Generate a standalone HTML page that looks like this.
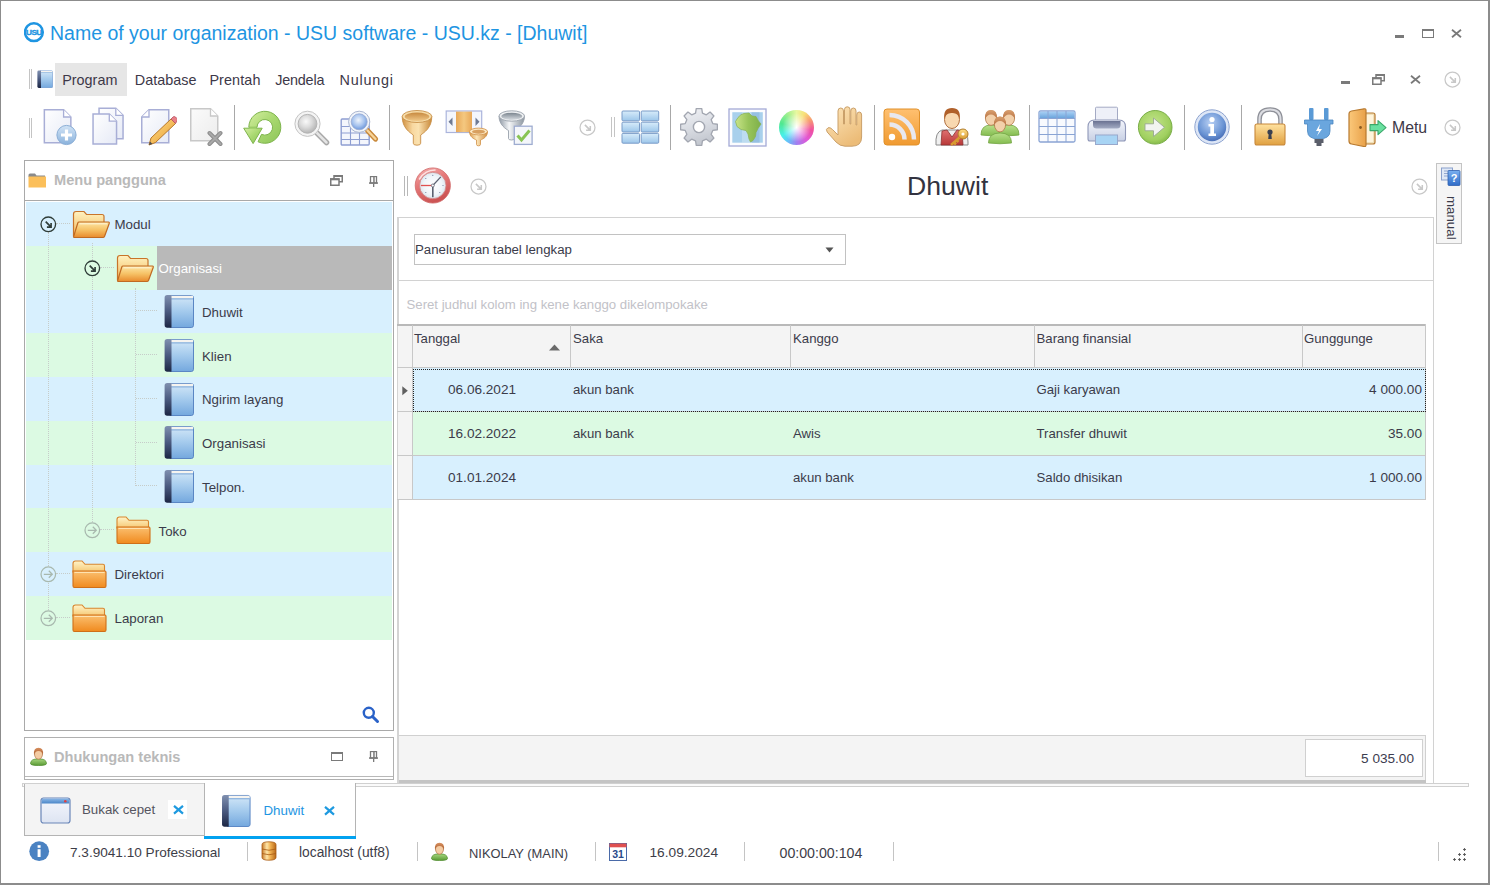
<!DOCTYPE html><html><head><meta charset="utf-8"><style>html,body{margin:0;padding:0;background:#fff;overflow:hidden}body{width:1490px;height:885px;position:relative;font-family:"Liberation Sans", sans-serif}div{position:absolute;box-sizing:border-box}.t{white-space:nowrap}</style></head><body><div style="left:0px;top:0px;width:1490px;height:885px;background:#fff"></div><svg style="position:absolute;left:24px;top:22px;" width="21" height="21" viewBox="0 0 21 21"><circle cx="9.9" cy="10.2" r="8.9" fill="none" stroke="#1e95e2" stroke-width="2.5"/><text x="9.9" y="12.9" text-anchor="middle" font-family="Liberation Sans" font-weight="700" font-size="7.4" fill="#1e95e2" stroke="#1e95e2" stroke-width="0.35" letter-spacing="-0.5" transform="translate(9.9 0) scale(1.12 1) translate(-9.9 0)">USU</text></svg><div class="t" style="left:50px;top:20.54px;font-size:19.5px;line-height:25px;color:#1e95e2;font-weight:400;">Name of your organization - USU software - USU.kz - [Dhuwit]</div><div style="left:1395px;top:35px;width:9px;height:3px;background:#7a7a7a"></div><div style="left:1422px;top:29px;width:12px;height:9px;border:1.5px solid #7a7a7a;border-top-width:2.5px"></div><svg style="position:absolute;left:1451px;top:29px;" width="11" height="9" viewBox="0 0 11 9"><path d="M1 0.8 L10 8.2 M10 0.8 L1 8.2" stroke="#7a7a7a" stroke-width="1.8" fill="none"/></svg><div style="left:29px;top:69px;width:1px;height:20px;background:#c4c4c4"></div><div style="left:31px;top:69px;width:1px;height:20px;background:#c4c4c4"></div><svg style="position:absolute;left:37px;top:70px;" width="16" height="18" viewBox="0 0 30 34"><defs><linearGradient id="g1" x1="0" y1="0" x2="0" y2="1"><stop offset="0" stop-color="#d4e8f8"/><stop offset="0.45" stop-color="#a8cdee"/><stop offset="1" stop-color="#74a8de"/></linearGradient><linearGradient id="g2" x1="0" y1="0" x2="0" y2="1"><stop offset="0" stop-color="#8090b0"/><stop offset="0.5" stop-color="#4a5a80"/><stop offset="1" stop-color="#1c2644"/></linearGradient></defs><rect x="5" y="1.5" width="24.5" height="32" rx="2.2" fill="url(#g1)" stroke="#5a86c4" stroke-width="1"/><rect x="5.5" y="1.8" width="23.5" height="2.6" fill="#f6f4f0"/><rect x="5.5" y="4.4" width="23.5" height="1" fill="#7aa6d8"/><path d="M3.2 1 L7.5 1 L7.5 33.8 L3.2 33.8 Q0.6 33.8 0.6 31 L0.6 3.8 Q0.6 1 3.2 1 Z" fill="url(#g2)"/></svg><div style="left:55px;top:63px;width:72px;height:33px;background:#e6e6e6"></div><div class="t" style="left:62.2px;top:70.71px;font-size:14.4px;line-height:19px;color:#3d3848;font-weight:400;letter-spacing:0px">Program</div><div class="t" style="left:134.79999999999998px;top:70.71px;font-size:14.4px;line-height:19px;color:#3d3848;font-weight:400;letter-spacing:0px">Database</div><div class="t" style="left:209.39999999999998px;top:70.71px;font-size:14.4px;line-height:19px;color:#3d3848;font-weight:400;letter-spacing:0.1px">Prentah</div><div class="t" style="left:275.2px;top:70.71px;font-size:14.4px;line-height:19px;color:#3d3848;font-weight:400;letter-spacing:-0.2px">Jendela</div><div class="t" style="left:339.59999999999997px;top:70.71px;font-size:14.4px;line-height:19px;color:#3d3848;font-weight:400;letter-spacing:0.75px">Nulungi</div><div style="left:1341px;top:81px;width:9px;height:3px;background:#7a7a7a"></div><svg style="position:absolute;left:1372px;top:74px;" width="13" height="11" viewBox="0 0 13 11"><rect x="4" y="0.75" width="8.25" height="6" fill="none" stroke="#7a7a7a" stroke-width="1.5"/><rect x="0.75" y="4" width="8.25" height="6.25" fill="#fff" stroke="#7a7a7a" stroke-width="1.5"/><rect x="4" y="0" width="9" height="2" fill="#7a7a7a"/><rect x="0" y="3.3" width="9.5" height="2" fill="#7a7a7a"/></svg><svg style="position:absolute;left:1410px;top:75px;" width="11" height="9" viewBox="0 0 11 9"><path d="M1 0.8 L10 8.2 M10 0.8 L1 8.2" stroke="#7a7a7a" stroke-width="1.8" fill="none"/></svg><svg style="position:absolute;left:1442.5px;top:69.8px;" width="19" height="19" viewBox="0 0 19 19"><circle cx="9.5" cy="9.5" r="7.5" fill="none" stroke="#c8c8c8" stroke-width="1.25"/><path d="M6.9 6.9 L12.1 12.1 M12.3 8.1 L12.3 12.3 L8.1 12.3" stroke="#c8c8c8" stroke-width="1.55" fill="none"/></svg><div style="left:29px;top:118px;width:1px;height:20px;background:#c4c4c4"></div><div style="left:31px;top:118px;width:1px;height:20px;background:#c4c4c4"></div><div style="left:234px;top:105px;width:1px;height:45px;background:#a8a8a8"></div><div style="left:389px;top:105px;width:1px;height:45px;background:#a8a8a8"></div><div style="left:670px;top:105px;width:1px;height:45px;background:#a8a8a8"></div><div style="left:874px;top:105px;width:1px;height:45px;background:#a8a8a8"></div><div style="left:1029px;top:105px;width:1px;height:45px;background:#a8a8a8"></div><div style="left:1184px;top:105px;width:1px;height:45px;background:#a8a8a8"></div><div style="left:1241px;top:105px;width:1px;height:45px;background:#a8a8a8"></div><div style="left:611px;top:117px;width:1px;height:20px;background:#c4c4c4"></div><div style="left:614px;top:117px;width:1px;height:20px;background:#c4c4c4"></div><svg style="position:absolute;left:577.5px;top:118.4px;" width="19" height="19" viewBox="0 0 19 19"><circle cx="9.5" cy="9.5" r="7.5" fill="none" stroke="#c8c8c8" stroke-width="1.25"/><path d="M6.9 6.9 L12.1 12.1 M12.3 8.1 L12.3 12.3 L8.1 12.3" stroke="#c8c8c8" stroke-width="1.55" fill="none"/></svg><svg style="position:absolute;left:1442.5px;top:117.5px;" width="19" height="19" viewBox="0 0 19 19"><circle cx="9.5" cy="9.5" r="7.5" fill="none" stroke="#c8c8c8" stroke-width="1.25"/><path d="M6.9 6.9 L12.1 12.1 M12.3 8.1 L12.3 12.3 L8.1 12.3" stroke="#c8c8c8" stroke-width="1.55" fill="none"/></svg><div class="t" style="left:1392px;top:116.93px;font-size:15.8px;line-height:21px;color:#3d3848;font-weight:400;">Metu</div><svg style="position:absolute;left:43px;top:108px;" width="35" height="38" viewBox="0 0 35 38"><defs><linearGradient id="g4" x1="0" y1="0" x2="1" y2="1"><stop offset="0" stop-color="#ffffff"/><stop offset="1" stop-color="#e6eaf6"/></linearGradient></defs><g transform="translate(0.6 1)"><path d="M0.75 0.75 L20 0.75 L27.25 8 L27.25 33.75 L0.75 33.75 Z" fill="url(#g4)" stroke="#a8aed6" stroke-width="1.5"/><path d="M20 0.75 L20 8 L27.25 8" fill="#fff" stroke="#a8aed6" stroke-width="1.3"/></g><defs><linearGradient id="g3" x1="0" y1="0" x2="0" y2="1"><stop offset="0" stop-color="#d2e4f6"/><stop offset="1" stop-color="#8ab2dc"/></linearGradient></defs><circle cx="23.5" cy="27" r="9.6" fill="url(#g3)" stroke="#8aaed6" stroke-width="1"/><path d="M23.5 21.5 V32.5 M18 27 H29" stroke="#fff" stroke-width="3.2"/></svg><svg style="position:absolute;left:91px;top:106px;" width="34" height="40" viewBox="0 0 34 40"><defs><linearGradient id="g5" x1="0" y1="0" x2="1" y2="1"><stop offset="0" stop-color="#ffffff"/><stop offset="1" stop-color="#e6eaf6"/></linearGradient></defs><g transform="translate(7.3 1.4)"><path d="M0.75 0.75 L17.5 0.75 L24.75 8 L24.75 31.25 L0.75 31.25 Z" fill="url(#g5)" stroke="#a8aed6" stroke-width="1.5"/><path d="M17.5 0.75 L17.5 8 L24.75 8" fill="#fff" stroke="#a8aed6" stroke-width="1.3"/></g><defs><linearGradient id="g6" x1="0" y1="0" x2="1" y2="1"><stop offset="0" stop-color="#ffffff"/><stop offset="1" stop-color="#e6eaf6"/></linearGradient></defs><g transform="translate(1.3 7.2)"><path d="M0.75 0.75 L17 0.75 L24.25 8 L24.25 30.75 L0.75 30.75 Z" fill="url(#g6)" stroke="#a8aed6" stroke-width="1.5"/><path d="M17 0.75 L17 8 L24.25 8" fill="#fff" stroke="#a8aed6" stroke-width="1.3"/></g></svg><svg style="position:absolute;left:140px;top:108px;" width="37" height="39" viewBox="0 0 37 39"><defs><linearGradient id="g9" x1="0" y1="0" x2="1" y2="1"><stop offset="0" stop-color="#ffffff"/><stop offset="1" stop-color="#e6eaf6"/></linearGradient></defs><g transform="translate(1 1)"><path d="M8 0.75 L27.75 0.75 L27.75 33.75 L0.75 33.75 L0.75 8 Z" fill="url(#g9)" stroke="#a8aed6" stroke-width="1.5"/><path d="M8 0.75 L8 8 L0.75 8" fill="#fff" stroke="#a8aed6" stroke-width="1.3"/></g><defs><linearGradient id="g7" x1="0" y1="0" x2="1" y2="1"><stop offset="0" stop-color="#ffe08a"/><stop offset="1" stop-color="#e89a30"/></linearGradient></defs><path d="M9 37 L11 30 L31 11 L35.5 15.5 L15.5 34.5 Z" fill="url(#g7)" stroke="#b8782a" stroke-width="1"/><path d="M31 11 L33 9 Q34 8 35.5 9 L37 10.5 Q38 12 37 13 L35.5 15.5 Z" fill="#e88088" stroke="#b85060" stroke-width="0.8"/><path d="M9 37 L10 33.5 L12.5 36 Z" fill="#505050"/></svg><svg style="position:absolute;left:189px;top:107px;" width="35" height="39" viewBox="0 0 35 39"><defs><linearGradient id="g10" x1="0" y1="0" x2="1" y2="1"><stop offset="0" stop-color="#fbfbfb"/><stop offset="1" stop-color="#ececec"/></linearGradient></defs><g transform="translate(1 1)"><path d="M0.75 0.75 L20.5 0.75 L27.75 8 L27.75 32.75 L0.75 32.75 Z" fill="url(#g10)" stroke="#c8c8c8" stroke-width="1.5"/><path d="M20.5 0.75 L20.5 8 L27.75 8" fill="#fff" stroke="#c8c8c8" stroke-width="1.3"/></g><path d="M20.5 26 L31.5 37 M31.5 26 L20.5 37" stroke="#8c8c8c" stroke-width="4" stroke-linecap="round"/><path d="M20.5 26 L31.5 37 M31.5 26 L20.5 37" stroke="#a8a8a8" stroke-width="2" stroke-linecap="round"/></svg><svg style="position:absolute;left:241px;top:108px;" width="42" height="38" viewBox="0 0 42 38"><defs><linearGradient id="g11" x1="0" y1="0" x2="1" y2="1"><stop offset="0" stop-color="#d4eea0"/><stop offset="0.5" stop-color="#a8d870"/><stop offset="1" stop-color="#8cc458"/></linearGradient></defs><path d="M7.800000000000001 19.3 A16 16 0 1 1 17.04 33.8 L20.5 26.37 A7.8 7.8 0 1 0 16.0 19.3 Z" fill="url(#g11)" stroke="#7eb44c" stroke-width="1"/><path d="M2.7 20.2 L21.2 20.2 L12.1 35.6 Z" fill="url(#g11)" stroke="#7eb44c" stroke-width="1" stroke-linejoin="round"/><path d="M8.5 19.5 L15.4 19.5 L15.4 20.8 L8.5 20.8 Z" fill="#a8d870"/></svg><svg style="position:absolute;left:292px;top:108px;" width="40" height="40" viewBox="0 0 40 40"><defs><radialGradient id="g12" cx="0.42" cy="0.38" r="0.6"><stop offset="0" stop-color="#fafafa"/><stop offset="0.55" stop-color="#dadada"/><stop offset="1" stop-color="#b8b8b8"/></radialGradient></defs><path d="M25 25 L34.5 34.5" stroke="#a8a8a8" stroke-width="5.5" stroke-linecap="round"/><path d="M25 25 L34.5 34.5" stroke="#e4e4e4" stroke-width="2.5" stroke-linecap="round"/><circle cx="15.5" cy="15.8" r="12.6" fill="#f4f4f4" stroke="#c4c4c4" stroke-width="1"/><circle cx="15.5" cy="15.8" r="9.4" fill="url(#g12)" stroke="#b4b4b4" stroke-width="1"/></svg><svg style="position:absolute;left:340px;top:107px;" width="40" height="40" viewBox="0 0 40 40"><rect x="1.2" y="12" width="28" height="26" rx="1" fill="#f4f6fc" stroke="#8e9ed2" stroke-width="1.4"/><path d="M1 19.5 H29 M1 26 H29 M1 32.5 H29 M10.5 12 V38 M19.5 12 V38" stroke="#8e9ed2" stroke-width="1.1"/><defs><radialGradient id="g13" cx="0.45" cy="0.4" r="0.6"><stop offset="0" stop-color="#eef4fc"/><stop offset="0.6" stop-color="#a8c4ee"/><stop offset="1" stop-color="#6e98dc"/></radialGradient></defs><path d="M27.5 23.5 L35.5 32" stroke="#c8883a" stroke-width="5.2" stroke-linecap="round"/><path d="M27.5 23.5 L35.5 32" stroke="#f8d498" stroke-width="2.4" stroke-linecap="round"/><circle cx="19.2" cy="14.8" r="10.6" fill="#f2f5fa" stroke="#aab6d0" stroke-width="1"/><circle cx="19.2" cy="14.8" r="8" fill="url(#g13)" stroke="#98aad0" stroke-width="0.8"/></svg><svg style="position:absolute;left:401px;top:108px;" width="33" height="38" viewBox="0 0 33 38"><defs><linearGradient id="g14" x1="0" y1="0" x2="1" y2="0"><stop offset="0" stop-color="#d09040"/><stop offset="0.35" stop-color="#f8d8a0"/><stop offset="0.55" stop-color="#fbe2b0"/><stop offset="1" stop-color="#c88838"/></linearGradient><linearGradient id="g15" x1="0" y1="0" x2="0" y2="1"><stop offset="0" stop-color="#c88a40"/><stop offset="1" stop-color="#f0c888"/></linearGradient></defs><path d="M1.2 8.5 C1.2 20 9 24.5 12.3 27 L12.3 35.3 Q12.3 37.2 16 37.2 Q19.7 37.2 19.7 35.3 L19.7 27 C23 24.5 30.8 20 30.8 8.5 Z" fill="url(#g14)" stroke="#c89048" stroke-width="0.9"/><ellipse cx="16" cy="8.5" rx="14.8" ry="6" fill="#f6dca8" stroke="#c89048" stroke-width="0.9"/><ellipse cx="16" cy="8.8" rx="12.3" ry="4.2" fill="url(#g15)"/></svg><svg style="position:absolute;left:445px;top:110px;" width="43" height="37" viewBox="0 0 43 37"><rect x="1.2" y="1" width="35.5" height="21.5" fill="#f4f6fc" stroke="#aab4dc" stroke-width="1.2"/><defs><linearGradient id="g17" x1="0" y1="0" x2="1" y2="0"><stop offset="0" stop-color="#e8a858"/><stop offset="0.5" stop-color="#f4c880"/><stop offset="1" stop-color="#e8a858"/></linearGradient></defs><rect x="11" y="1.6" width="16" height="20.5" fill="url(#g17)"/><path d="M7.5 7.5 L3.5 11.8 L7.5 16 Z M30.5 7.5 L34.5 11.8 L30.5 16 Z" fill="#6e7a94"/><defs><linearGradient id="g16" x1="0" y1="0" x2="1" y2="0"><stop offset="0" stop-color="#d8984a"/><stop offset="0.4" stop-color="#fde6b8"/><stop offset="1" stop-color="#d08c40"/></linearGradient></defs><path d="M24.5 21.5 C24.5 27 29 29 31.5 30 L31.5 34.5 Q31.5 35.8 33.5 35.8 Q35.5 35.8 35.5 34.5 L35.5 30 C38 29 42.5 27 42.5 21.5 Z" fill="url(#g16)" stroke="#d09048" stroke-width="0.8"/><ellipse cx="33.5" cy="21.5" rx="9" ry="3.4" fill="#fbe6c0" stroke="#d09048" stroke-width="0.8"/><ellipse cx="33.5" cy="21.7" rx="6.5" ry="2" fill="#d8a060"/></svg><svg style="position:absolute;left:498px;top:108px;" width="36" height="38" viewBox="0 0 36 38"><defs><linearGradient id="g18" x1="0" y1="0" x2="1" y2="0"><stop offset="0" stop-color="#8e98a4"/><stop offset="0.4" stop-color="#f4f6f8"/><stop offset="1" stop-color="#8a949e"/></linearGradient><linearGradient id="g19" x1="0" y1="0" x2="0" y2="1"><stop offset="0" stop-color="#7a848e"/><stop offset="1" stop-color="#d8dde2"/></linearGradient></defs><path d="M1 8 C1 17 8 21 10.5 22.5 L10.5 30.5 Q10.5 32 13.5 32 Q16.5 32 16.5 30.5 L16.5 22.5 C19 21 26.5 17 26.5 8 Z" fill="url(#g18)" stroke="#9aa2ac" stroke-width="0.9"/><ellipse cx="13.75" cy="8" rx="12.75" ry="5.2" fill="#eef0f2" stroke="#9aa2ac" stroke-width="0.9"/><ellipse cx="13.75" cy="8.3" rx="10.5" ry="3.6" fill="url(#g19)"/><rect x="16.3" y="18.2" width="17.8" height="18.2" fill="#f4f6fa" stroke="#9eacd0" stroke-width="1.3"/><path d="M19.5 27.5 L23.5 32 L31.5 22.5" stroke="#88c454" stroke-width="3" fill="none"/></svg><svg style="position:absolute;left:621px;top:110px;" width="40" height="35" viewBox="0 0 40 35"><defs><linearGradient id="g20" x1="0" y1="0" x2="0" y2="1"><stop offset="0" stop-color="#d8ecfa"/><stop offset="1" stop-color="#9cc6ea"/></linearGradient></defs><rect x="1.0" y="1.0" width="17.5" height="9.8" rx="1" fill="url(#g20)" stroke="#7a9cc8" stroke-width="1"/><rect x="20.2" y="1.0" width="17.5" height="9.8" rx="1" fill="url(#g20)" stroke="#7a9cc8" stroke-width="1"/><rect x="1.0" y="12.2" width="17.5" height="9.8" rx="1" fill="url(#g20)" stroke="#7a9cc8" stroke-width="1"/><rect x="20.2" y="12.2" width="17.5" height="9.8" rx="1" fill="url(#g20)" stroke="#7a9cc8" stroke-width="1"/><rect x="1.0" y="23.4" width="17.5" height="9.8" rx="1" fill="url(#g20)" stroke="#7a9cc8" stroke-width="1"/><rect x="20.2" y="23.4" width="17.5" height="9.8" rx="1" fill="url(#g20)" stroke="#7a9cc8" stroke-width="1"/></svg><svg style="position:absolute;left:680px;top:108px;" width="38" height="38" viewBox="0 0 38 38"><defs><linearGradient id="g21" x1="0" y1="0" x2="0.3" y2="1"><stop offset="0" stop-color="#f2f3f6"/><stop offset="0.5" stop-color="#dcdfe5"/><stop offset="1" stop-color="#c4c8d0"/></linearGradient></defs><polygon points="15.56,5.22 16.25,0.60 21.75,0.60 22.44,5.22 26.31,6.83 30.06,4.05 33.95,7.94 31.17,11.69 32.78,15.56 37.40,16.25 37.40,21.75 32.78,22.44 31.17,26.31 33.95,30.06 30.06,33.95 26.31,31.17 22.44,32.78 21.75,37.40 16.25,37.40 15.56,32.78 11.69,31.17 7.94,33.95 4.05,30.06 6.83,26.31 5.22,22.44 0.60,21.75 0.60,16.25 5.22,15.56 6.83,11.69 4.05,7.94 7.94,4.05 11.69,6.83" fill="url(#g21)" stroke="#a2a6b0" stroke-width="1.3" stroke-linejoin="round"/><circle cx="19" cy="19" r="5.6" fill="#fff" stroke="#a2a6b0" stroke-width="1.4"/></svg><svg style="position:absolute;left:728px;top:108px;" width="39" height="39" viewBox="0 0 39 39"><rect x="1" y="1" width="37" height="37" fill="#fbfcfe" stroke="#a4aad6" stroke-width="1.3"/><rect x="4.3" y="4.2" width="30.5" height="30.5" fill="#a8d0ec"/><rect x="14" y="4.2" width="9.5" height="30.5" fill="#d8ecf6" opacity="0.45"/><rect x="23.5" y="4.2" width="8" height="30.5" fill="#80acd8" opacity="0.45"/><defs><linearGradient id="g22" x1="0" y1="0" x2="1" y2="0"><stop offset="0" stop-color="#c8e488"/><stop offset="0.5" stop-color="#98c45a"/><stop offset="1" stop-color="#7eb04a"/></linearGradient></defs><path d="M10 9.5 Q13 5.8 16 5.5 L21 5 L24 8 L28 8.5 L30.5 13 L33 16 L30 20.5 L28 24.5 L27.5 28.5 L25 32.5 L22.5 34 L21 31 L20 26 L18 22.5 L13 21.5 L9 18.5 L7.5 13.5 Z" fill="url(#g22)" stroke="#86b050" stroke-width="0.7"/></svg><div style="left:778.8px;top:109.8px;width:35px;height:35px;border-radius:50%;background:radial-gradient(circle at 50% 50%, rgba(255,255,255,1) 0%, rgba(255,255,255,0.7) 18%, rgba(255,255,255,0) 58%),conic-gradient(from 0deg, #e8f8a0, #f8e078, #f8a070 60deg, #f050a0 100deg, #e058d8 140deg, #a080f0 180deg, #60c8f8 215deg, #48f0e8 240deg, #50e890 285deg, #a8f090 330deg, #e8f8a0)"></div><svg style="position:absolute;left:825px;top:106px;" width="38" height="41" viewBox="0 0 38 41"><defs><linearGradient id="g23" x1="0" y1="0" x2="0.6" y2="1"><stop offset="0" stop-color="#fde6bc"/><stop offset="1" stop-color="#ecbc78"/></linearGradient></defs><path d="M13 29 L13 5 Q13 2 15.75 2 Q18.5 2 18.5 5 L18.5 18 L19.5 18 L19.5 3.5 Q19.5 0.8 22.25 0.8 Q25 0.8 25 3.5 L25 18 L25.8 18 L25.8 5 Q25.8 2 28.4 2 Q31 2 31 5 L31 19 L31.8 19 L31.8 9 Q31.8 6 34.2 6 Q36.6 6 36.6 9 L36.6 31 Q36.6 40.2 27 40.2 L20 40.2 Q15 40.2 11 36 L2.2 26 Q0.3 23 3 21.8 Q5 21 7.5 23.5 Z" fill="url(#g23)" stroke="#caa06a" stroke-width="1"/></svg><svg style="position:absolute;left:883px;top:108px;" width="38" height="38" viewBox="0 0 38 38"><defs><linearGradient id="g24" x1="0" y1="0" x2="0" y2="1"><stop offset="0" stop-color="#ffc070"/><stop offset="1" stop-color="#f09a30"/></linearGradient></defs><rect x="1" y="1" width="35.5" height="36" rx="3" fill="url(#g24)" stroke="#e0902a" stroke-width="1"/><circle cx="9" cy="29" r="3.2" fill="#fff"/><path d="M6.5 16.5 A15 15 0 0 1 21.5 31.5" stroke="#e8e8f0" stroke-width="4.5" fill="none"/><path d="M6.5 7 A24.5 24.5 0 0 1 31 31.5" stroke="#e8e8f0" stroke-width="4.5" fill="none"/></svg><svg style="position:absolute;left:934px;top:106px;" width="37" height="41" viewBox="0 0 37 41"><defs><linearGradient id="g25" x1="0" y1="0" x2="0" y2="1"><stop offset="0" stop-color="#e07070"/><stop offset="1" stop-color="#b83838"/></linearGradient><linearGradient id="g26" x1="0" y1="0" x2="0" y2="1"><stop offset="0" stop-color="#ffe08a"/><stop offset="1" stop-color="#d89a30"/></linearGradient></defs><path d="M2 39 Q1 26 8 24 L28 24 Q34 26 34 36 L34 39 Z" fill="#f0f0f0" stroke="#8a8a8a" stroke-width="1"/><path d="M7 39 L8 25 L13 24 L18 31 L23 24 L28 25 L29 39 Z" fill="url(#g25)" stroke="#8a3030" stroke-width="0.8"/><ellipse cx="18" cy="13.5" rx="7.5" ry="9" fill="#f8d8b0" stroke="#b07040" stroke-width="1"/><path d="M10.3 13 Q9 2 18 2 Q27 2 25.7 13 Q24 6.5 18 7 Q12 6.5 10.3 13 Z" fill="#b0602a"/><circle cx="29" cy="28" r="5" fill="url(#g26)" stroke="#b07a28" stroke-width="1"/><circle cx="29" cy="28" r="1.6" fill="#fff"/><path d="M25.5 31.5 L17 39 M20 36.5 L22 38.5 M22.5 34 L24.5 36" stroke="#d89a30" stroke-width="2.5"/></svg><svg style="position:absolute;left:980px;top:108px;" width="40" height="38" viewBox="0 0 40 38"><defs><linearGradient id="g27" x1="0" y1="0" x2="0" y2="1"><stop offset="0" stop-color="#b8e08a"/><stop offset="1" stop-color="#84bc50"/></linearGradient><linearGradient id="g28" x1="0" y1="0" x2="0" y2="1"><stop offset="0" stop-color="#d8a070"/><stop offset="1" stop-color="#b87040"/></linearGradient></defs><path d="M1 27 Q1 17 11 17 Q21 17 21 27 Q11 28.5 1 27 Z" fill="url(#g27)" stroke="#74a444" stroke-width="0.8"/><ellipse cx="11" cy="10" rx="5.6" ry="7.4" fill="#f2d0aa" stroke="#b07848" stroke-width="0.8"/><path d="M5.2 11.0 Q4.2 2.0 11 2.0 Q17.8 2.0 16.8 11.0 Q15.0 6.5 11 6.5 Q7.0 6.5 5.2 11.0 Z" fill="url(#g28)"/><path d="M19 27 Q19 17 29 17 Q39 17 39 27 Q29 28.5 19 27 Z" fill="url(#g27)" stroke="#74a444" stroke-width="0.8"/><ellipse cx="29" cy="10" rx="5.6" ry="7.4" fill="#f2d0aa" stroke="#b07848" stroke-width="0.8"/><path d="M23.2 11.0 Q22.2 2.0 29 2.0 Q35.8 2.0 34.8 11.0 Q33.0 6.5 29 6.5 Q25.0 6.5 23.2 11.0 Z" fill="url(#g28)"/><path d="M8.5 35.0 Q8.5 25.0 20 25.0 Q31.5 25.0 31.5 35.0 Q20 36.5 8.5 35.0 Z" fill="url(#g27)" stroke="#74a444" stroke-width="0.8"/><ellipse cx="20" cy="16.5" rx="5.6" ry="7.4" fill="#f2d0aa" stroke="#b07848" stroke-width="0.8"/><path d="M14.2 17.5 Q13.2 8.5 20 8.5 Q26.8 8.5 25.8 17.5 Q24.0 13.0 20 13.0 Q16.0 13.0 14.2 17.5 Z" fill="url(#g28)"/></svg><svg style="position:absolute;left:1038px;top:110px;" width="38" height="33" viewBox="0 0 38 33"><defs><linearGradient id="g29" x1="0" y1="0" x2="0" y2="1"><stop offset="0" stop-color="#a8d0f4"/><stop offset="1" stop-color="#6aa4dc"/></linearGradient></defs><rect x="1" y="1" width="36" height="31" rx="1.5" fill="#f8fafe" stroke="#8aa4d4" stroke-width="1.3"/><rect x="1.6" y="1.6" width="34.8" height="6.5" fill="url(#g29)"/><path d="M1 8.5 H37 M1 16.5 H37 M1 24.5 H37 M10 1 V32 M19 1 V32 M28 1 V32" stroke="#8aa4d4" stroke-width="1"/></svg><svg style="position:absolute;left:1087px;top:106px;" width="40" height="40" viewBox="0 0 40 40"><defs><linearGradient id="g30" x1="0" y1="0" x2="0" y2="1"><stop offset="0" stop-color="#f4f6fc"/><stop offset="1" stop-color="#c8d0e4"/></linearGradient><linearGradient id="g31" x1="0" y1="0" x2="0" y2="1"><stop offset="0" stop-color="#6a7292"/><stop offset="1" stop-color="#a4acc4"/></linearGradient></defs><rect x="8.5" y="1.2" width="22" height="16" rx="1" fill="#eef0f8" stroke="#a4aac4" stroke-width="1"/><path d="M1 21 Q1 14 7.5 14 L32 14 Q38.5 14 38.5 21 L38.5 33 Q38.5 35 36.5 35 L3 35 Q1 35 1 33 Z" fill="url(#g30)" stroke="#9098b8" stroke-width="1.1"/><path d="M6 15 L33.5 15 L33.5 19 Q33.5 22.5 30 22.5 L9.5 22.5 Q6 22.5 6 19 Z" fill="url(#g31)"/><rect x="8.5" y="29" width="22" height="9.5" fill="#a8d4f4" stroke="#98a8cc" stroke-width="1"/></svg><svg style="position:absolute;left:1137px;top:109px;" width="37" height="37" viewBox="0 0 37 37"><defs><radialGradient id="g32" cx="0.45" cy="0.4" r="0.6"><stop offset="0" stop-color="#c4e48c"/><stop offset="0.8" stop-color="#a0d060"/><stop offset="1" stop-color="#88bc4c"/></radialGradient></defs><circle cx="18.2" cy="18.3" r="16.8" fill="url(#g32)" stroke="#7aae48" stroke-width="1"/><path d="M8 14.8 L16.5 14.8 L16.5 9 L27.5 18.3 L16.5 27.6 L16.5 21.8 L8 21.8 Z" fill="#f2f4f0" stroke="#98a890" stroke-width="0.9" stroke-linejoin="round"/></svg><svg style="position:absolute;left:1194px;top:109px;" width="37" height="37" viewBox="0 0 37 37"><defs><radialGradient id="g33" cx="0.45" cy="0.35" r="0.65"><stop offset="0" stop-color="#b8d0f4"/><stop offset="0.7" stop-color="#6a94d4"/><stop offset="1" stop-color="#4a70b8"/></radialGradient></defs><circle cx="18" cy="18" r="17.2" fill="#dde6f6" stroke="#8ea4d0" stroke-width="1"/><circle cx="18" cy="18" r="14.2" fill="url(#g33)"/><circle cx="18" cy="10.5" r="2.6" fill="#fff"/><path d="M14.5 15 L20 15 L20 24.5 L22 24.5 L22 27 L14.5 27 L14.5 24.5 L16.3 24.5 L16.3 17.5 L14.5 17.5 Z" fill="#fff"/></svg><svg style="position:absolute;left:1254px;top:107px;" width="33" height="40" viewBox="0 0 33 40"><defs><linearGradient id="g34" x1="0" y1="0" x2="0" y2="1"><stop offset="0" stop-color="#ffe2a0"/><stop offset="1" stop-color="#e0a040"/></linearGradient></defs><path d="M5.5 18 L5.5 12.5 Q5.5 2.5 16 2.5 Q26.5 2.5 26.5 12.5 L26.5 18" stroke="#8e9098" stroke-width="4.6" fill="none"/><path d="M5.5 18 L5.5 12.5 Q5.5 2.5 16 2.5 Q26.5 2.5 26.5 12.5 L26.5 18" stroke="#dcdde2" stroke-width="2" fill="none"/><rect x="1" y="17" width="30" height="21" rx="2" fill="url(#g34)" stroke="#c8883a" stroke-width="1.1"/><circle cx="16" cy="25" r="2.6" fill="#3a4050"/><path d="M14.8 26 L17.2 26 L17.8 32 L14.2 32 Z" fill="#3a4050"/></svg><svg style="position:absolute;left:1303px;top:107px;" width="32" height="41" viewBox="0 0 32 41"><rect x="6" y="1" width="4.5" height="12" rx="1" fill="#5a9ad6"/><rect x="21" y="1" width="4.5" height="12" rx="1" fill="#5a9ad6"/><path d="M1.5 13 L30 13 L30 17 L27 17 L27 24 Q27 32 15.8 32 Q4.5 32 4.5 24 L4.5 17 L1.5 17 Z" fill="#6aa6de" stroke="#4a86c0" stroke-width="0.8"/><path d="M17 17 L13 24 L16 24 L14 29 L19 22 L16 22 Z" fill="#fff"/><rect x="11.5" y="32" width="9" height="4" fill="#5a5e6a"/><rect x="13.5" y="35.5" width="5" height="3.5" fill="#5a5e6a"/></svg><svg style="position:absolute;left:1347px;top:108px;" width="42" height="39" viewBox="0 0 42 39"><defs><linearGradient id="g35" x1="0" y1="0" x2="1" y2="0"><stop offset="0" stop-color="#fbc87a"/><stop offset="1" stop-color="#e8a048"/></linearGradient></defs><path d="M16 5 L26 5 Q28 5 28 7 L28 34 Q28 36 26 36 L16 36 Z" fill="#f0e0b8" stroke="#b87a30" stroke-width="1.2"/><rect x="18" y="7" width="8" height="27" fill="#fff4dc"/><path d="M2 6 Q2 3.5 4.5 3 L17 0.8 Q19 0.5 19 2.5 L19 37 Q19 39 17 38.5 L4.5 36 Q2 35.5 2 33 Z" fill="url(#g35)" stroke="#b87a30" stroke-width="1.2"/><circle cx="13.5" cy="19.5" r="1.4" fill="#8a5a20"/><path d="M23 16.6 L31 16.6 L31 12.6 L39 19.6 L31 26.7 L31 22.6 L23 22.6 Z" fill="#6ae0a0" stroke="#3aa86a" stroke-width="1.1" stroke-linejoin="round"/></svg><div style="left:24px;top:160px;width:370px;height:571px;border:1px solid #a9a9a9;background:#fff"></div><div style="left:25px;top:200px;width:368px;height:1px;background:#a9a9a9"></div><svg style="position:absolute;left:28px;top:173px;" width="19" height="15" viewBox="0 0 19 15"><path d="M0.5 2 Q0.5 0.5 2 0.5 L7 0.5 L8.5 2.5 L17 2.5 L17 4 L0.5 4 Z" fill="#8a8a8a"/><rect x="0.5" y="3.5" width="17.5" height="11" fill="#fbbf5a"/></svg><div class="t" style="left:54px;top:171.44px;font-size:14.6px;line-height:19px;color:#b9b9b9;font-weight:700;">Menu pangguna</div><svg style="position:absolute;left:330px;top:175px;" width="13" height="11" viewBox="0 0 13 11"><rect x="4" y="0.75" width="8.25" height="6" fill="none" stroke="#7a7a7a" stroke-width="1.5"/><rect x="0.75" y="4" width="8.25" height="6.25" fill="#fff" stroke="#7a7a7a" stroke-width="1.5"/><rect x="4" y="0" width="9" height="2" fill="#7a7a7a"/><rect x="0" y="3.3" width="9.5" height="2" fill="#7a7a7a"/></svg><svg style="position:absolute;left:369px;top:176px;" width="9" height="11" viewBox="0 0 9 11"><rect x="1.5" y="0.5" width="6" height="6.5" fill="none" stroke="#7a7a7a" stroke-width="1.3"/><rect x="4.2" y="1" width="1.5" height="6" fill="#7a7a7a"/><rect x="0" y="6.3" width="9" height="1.5" fill="#7a7a7a"/><rect x="4" y="7.5" width="1.3" height="3.5" fill="#7a7a7a"/></svg><div style="left:26px;top:202.0px;width:366px;height:43.75px;background:#d8f0fe"></div><div style="left:26px;top:245.75px;width:366px;height:43.75px;background:#dcfae3"></div><div style="left:26px;top:289.5px;width:366px;height:43.75px;background:#d8f0fe"></div><div style="left:26px;top:333.25px;width:366px;height:43.75px;background:#dcfae3"></div><div style="left:26px;top:377.0px;width:366px;height:43.75px;background:#d8f0fe"></div><div style="left:26px;top:420.75px;width:366px;height:43.75px;background:#dcfae3"></div><div style="left:26px;top:464.5px;width:366px;height:43.75px;background:#d8f0fe"></div><div style="left:26px;top:508.25px;width:366px;height:43.75px;background:#dcfae3"></div><div style="left:26px;top:552.0px;width:366px;height:43.75px;background:#d8f0fe"></div><div style="left:26px;top:595.75px;width:366px;height:43.75px;background:#dcfae3"></div><div style="left:157px;top:245.75px;width:235px;height:43.75px;background:#b9b9b9"></div><div style="left:48px;top:231.875px;width:1px;height:377.75px;border-left:1px dotted #c6ccc9"></div><div style="left:92px;top:243px;width:1px;height:279.125px;border-left:1px dotted #c6ccc9"></div><div style="left:135px;top:288px;width:1px;height:198.375px;border-left:1px dotted #c6ccc9"></div><div style="left:56px;top:223px;width:14px;height:1px;border-top:1px dotted #c6ccc9"></div><div style="left:56px;top:573px;width:14px;height:1px;border-top:1px dotted #c6ccc9"></div><div style="left:56px;top:617px;width:14px;height:1px;border-top:1px dotted #c6ccc9"></div><div style="left:100px;top:267px;width:14px;height:1px;border-top:1px dotted #c6ccc9"></div><div style="left:100px;top:529px;width:14px;height:1px;border-top:1px dotted #c6ccc9"></div><div style="left:136px;top:310px;width:21px;height:1px;border-top:1px dotted #c6ccc9"></div><div style="left:136px;top:354px;width:21px;height:1px;border-top:1px dotted #c6ccc9"></div><div style="left:136px;top:398px;width:21px;height:1px;border-top:1px dotted #c6ccc9"></div><div style="left:136px;top:442px;width:21px;height:1px;border-top:1px dotted #c6ccc9"></div><div style="left:136px;top:485px;width:21px;height:1px;border-top:1px dotted #c6ccc9"></div><svg style="position:absolute;left:38.7px;top:215.17499999999998px;" width="18.6" height="18.6" viewBox="0 0 18.6 18.6"><circle cx="9.3" cy="9.3" r="7.3" fill="#d8f0fe" stroke="#2e3c38" stroke-width="1.35"/><path d="M6.700000000000001 6.700000000000001 L11.9 11.9 M12.100000000000001 7.9 L12.100000000000001 12.100000000000001 L7.9 12.100000000000001" stroke="#2e3c38" stroke-width="1.6500000000000001" fill="none"/></svg><svg style="position:absolute;left:72px;top:210.0px;" width="38" height="29" viewBox="0 0 38 29"><defs><linearGradient id="g36" x1="0" y1="0" x2="0" y2="1"><stop offset="0" stop-color="#fff2c0"/><stop offset="1" stop-color="#f2b85a"/></linearGradient><linearGradient id="g37" x1="0" y1="0" x2="0" y2="1"><stop offset="0" stop-color="#fde6a6"/><stop offset="0.5" stop-color="#f6c266"/><stop offset="1" stop-color="#e88a2c"/></linearGradient></defs><path d="M1.5 4 Q1.5 1.5 4 1.5 L12 1.5 L14.5 4.5 L30 4.5 Q32 4.5 32 6.5 L32 26 L1.5 26 Z" fill="url(#g36)" stroke="#c8742a" stroke-width="1.2"/><path d="M7 12 L36.5 12 Q37.5 12 37.2 13.5 L32.5 26.5 Q32 27.5 31 27.5 L2.5 27.5 Q1.3 27.5 1.7 26.3 L5.8 13 Q6.2 12 7 12 Z" fill="url(#g37)" stroke="#c06a22" stroke-width="1.2"/><path d="M7.5 13.8 L35 13.8" stroke="#fff6d8" stroke-width="1"/></svg><div class="t" style="left:114.5px;top:216.49px;font-size:13.3px;line-height:17px;color:#3b3b4a;font-weight:400;">Modul</div><svg style="position:absolute;left:82.7px;top:258.925px;" width="18.6" height="18.6" viewBox="0 0 18.6 18.6"><circle cx="9.3" cy="9.3" r="7.3" fill="#dcfae3" stroke="#2e3c38" stroke-width="1.35"/><path d="M6.700000000000001 6.700000000000001 L11.9 11.9 M12.100000000000001 7.9 L12.100000000000001 12.100000000000001 L7.9 12.100000000000001" stroke="#2e3c38" stroke-width="1.6500000000000001" fill="none"/></svg><svg style="position:absolute;left:116px;top:253.75px;" width="38" height="29" viewBox="0 0 38 29"><defs><linearGradient id="g38" x1="0" y1="0" x2="0" y2="1"><stop offset="0" stop-color="#fff2c0"/><stop offset="1" stop-color="#f2b85a"/></linearGradient><linearGradient id="g39" x1="0" y1="0" x2="0" y2="1"><stop offset="0" stop-color="#fde6a6"/><stop offset="0.5" stop-color="#f6c266"/><stop offset="1" stop-color="#e88a2c"/></linearGradient></defs><path d="M1.5 4 Q1.5 1.5 4 1.5 L12 1.5 L14.5 4.5 L30 4.5 Q32 4.5 32 6.5 L32 26 L1.5 26 Z" fill="url(#g38)" stroke="#c8742a" stroke-width="1.2"/><path d="M7 12 L36.5 12 Q37.5 12 37.2 13.5 L32.5 26.5 Q32 27.5 31 27.5 L2.5 27.5 Q1.3 27.5 1.7 26.3 L5.8 13 Q6.2 12 7 12 Z" fill="url(#g39)" stroke="#c06a22" stroke-width="1.2"/><path d="M7.5 13.8 L35 13.8" stroke="#fff6d8" stroke-width="1"/></svg><div class="t" style="left:158.5px;top:260.24px;font-size:13.3px;line-height:17px;color:#ffffff;font-weight:400;">Organisasi</div><svg style="position:absolute;left:163.5px;top:294.0px;" width="30" height="34" viewBox="0 0 30 34"><defs><linearGradient id="g40" x1="0" y1="0" x2="0" y2="1"><stop offset="0" stop-color="#d4e8f8"/><stop offset="0.45" stop-color="#a8cdee"/><stop offset="1" stop-color="#74a8de"/></linearGradient><linearGradient id="g41" x1="0" y1="0" x2="0" y2="1"><stop offset="0" stop-color="#8090b0"/><stop offset="0.5" stop-color="#4a5a80"/><stop offset="1" stop-color="#1c2644"/></linearGradient></defs><rect x="5" y="1.5" width="24.5" height="32" rx="2.2" fill="url(#g40)" stroke="#5a86c4" stroke-width="1"/><rect x="5.5" y="1.8" width="23.5" height="2.6" fill="#f6f4f0"/><rect x="5.5" y="4.4" width="23.5" height="1" fill="#7aa6d8"/><path d="M3.2 1 L7.5 1 L7.5 33.8 L3.2 33.8 Q0.6 33.8 0.6 31 L0.6 3.8 Q0.6 1 3.2 1 Z" fill="url(#g41)"/></svg><div class="t" style="left:202px;top:303.99px;font-size:13.3px;line-height:17px;color:#3b3b4a;font-weight:400;">Dhuwit</div><svg style="position:absolute;left:163.5px;top:337.75px;" width="30" height="34" viewBox="0 0 30 34"><defs><linearGradient id="g42" x1="0" y1="0" x2="0" y2="1"><stop offset="0" stop-color="#d4e8f8"/><stop offset="0.45" stop-color="#a8cdee"/><stop offset="1" stop-color="#74a8de"/></linearGradient><linearGradient id="g43" x1="0" y1="0" x2="0" y2="1"><stop offset="0" stop-color="#8090b0"/><stop offset="0.5" stop-color="#4a5a80"/><stop offset="1" stop-color="#1c2644"/></linearGradient></defs><rect x="5" y="1.5" width="24.5" height="32" rx="2.2" fill="url(#g42)" stroke="#5a86c4" stroke-width="1"/><rect x="5.5" y="1.8" width="23.5" height="2.6" fill="#f6f4f0"/><rect x="5.5" y="4.4" width="23.5" height="1" fill="#7aa6d8"/><path d="M3.2 1 L7.5 1 L7.5 33.8 L3.2 33.8 Q0.6 33.8 0.6 31 L0.6 3.8 Q0.6 1 3.2 1 Z" fill="url(#g43)"/></svg><div class="t" style="left:202px;top:347.74px;font-size:13.3px;line-height:17px;color:#3b3b4a;font-weight:400;">Klien</div><svg style="position:absolute;left:163.5px;top:381.5px;" width="30" height="34" viewBox="0 0 30 34"><defs><linearGradient id="g44" x1="0" y1="0" x2="0" y2="1"><stop offset="0" stop-color="#d4e8f8"/><stop offset="0.45" stop-color="#a8cdee"/><stop offset="1" stop-color="#74a8de"/></linearGradient><linearGradient id="g45" x1="0" y1="0" x2="0" y2="1"><stop offset="0" stop-color="#8090b0"/><stop offset="0.5" stop-color="#4a5a80"/><stop offset="1" stop-color="#1c2644"/></linearGradient></defs><rect x="5" y="1.5" width="24.5" height="32" rx="2.2" fill="url(#g44)" stroke="#5a86c4" stroke-width="1"/><rect x="5.5" y="1.8" width="23.5" height="2.6" fill="#f6f4f0"/><rect x="5.5" y="4.4" width="23.5" height="1" fill="#7aa6d8"/><path d="M3.2 1 L7.5 1 L7.5 33.8 L3.2 33.8 Q0.6 33.8 0.6 31 L0.6 3.8 Q0.6 1 3.2 1 Z" fill="url(#g45)"/></svg><div class="t" style="left:202px;top:391.49px;font-size:13.3px;line-height:17px;color:#3b3b4a;font-weight:400;">Ngirim layang</div><svg style="position:absolute;left:163.5px;top:425.25px;" width="30" height="34" viewBox="0 0 30 34"><defs><linearGradient id="g46" x1="0" y1="0" x2="0" y2="1"><stop offset="0" stop-color="#d4e8f8"/><stop offset="0.45" stop-color="#a8cdee"/><stop offset="1" stop-color="#74a8de"/></linearGradient><linearGradient id="g47" x1="0" y1="0" x2="0" y2="1"><stop offset="0" stop-color="#8090b0"/><stop offset="0.5" stop-color="#4a5a80"/><stop offset="1" stop-color="#1c2644"/></linearGradient></defs><rect x="5" y="1.5" width="24.5" height="32" rx="2.2" fill="url(#g46)" stroke="#5a86c4" stroke-width="1"/><rect x="5.5" y="1.8" width="23.5" height="2.6" fill="#f6f4f0"/><rect x="5.5" y="4.4" width="23.5" height="1" fill="#7aa6d8"/><path d="M3.2 1 L7.5 1 L7.5 33.8 L3.2 33.8 Q0.6 33.8 0.6 31 L0.6 3.8 Q0.6 1 3.2 1 Z" fill="url(#g47)"/></svg><div class="t" style="left:202px;top:435.24px;font-size:13.3px;line-height:17px;color:#3b3b4a;font-weight:400;">Organisasi</div><svg style="position:absolute;left:163.5px;top:469.0px;" width="30" height="34" viewBox="0 0 30 34"><defs><linearGradient id="g48" x1="0" y1="0" x2="0" y2="1"><stop offset="0" stop-color="#d4e8f8"/><stop offset="0.45" stop-color="#a8cdee"/><stop offset="1" stop-color="#74a8de"/></linearGradient><linearGradient id="g49" x1="0" y1="0" x2="0" y2="1"><stop offset="0" stop-color="#8090b0"/><stop offset="0.5" stop-color="#4a5a80"/><stop offset="1" stop-color="#1c2644"/></linearGradient></defs><rect x="5" y="1.5" width="24.5" height="32" rx="2.2" fill="url(#g48)" stroke="#5a86c4" stroke-width="1"/><rect x="5.5" y="1.8" width="23.5" height="2.6" fill="#f6f4f0"/><rect x="5.5" y="4.4" width="23.5" height="1" fill="#7aa6d8"/><path d="M3.2 1 L7.5 1 L7.5 33.8 L3.2 33.8 Q0.6 33.8 0.6 31 L0.6 3.8 Q0.6 1 3.2 1 Z" fill="url(#g49)"/></svg><div class="t" style="left:202px;top:478.99px;font-size:13.3px;line-height:17px;color:#3b3b4a;font-weight:400;">Telpon.</div><svg style="position:absolute;left:82.7px;top:521.4250000000001px;" width="18.6" height="18.6" viewBox="0 0 18.6 18.6"><circle cx="9.3" cy="9.3" r="7.3" fill="#dcfae3" stroke="#a8b8ae" stroke-width="1.25"/><path d="M4.800000000000001 9.3 L13.3 9.3 M9.8 5.800000000000001 L13.3 9.3 L9.8 12.8" stroke="#a8b8ae" stroke-width="1.25" fill="none"/></svg><svg style="position:absolute;left:116px;top:516.25px;" width="35" height="29" viewBox="0 0 35 29"><defs><linearGradient id="g50" x1="0" y1="0" x2="0" y2="1"><stop offset="0" stop-color="#fff4c8"/><stop offset="1" stop-color="#f6c874"/></linearGradient><linearGradient id="g51" x1="0" y1="0" x2="0" y2="1"><stop offset="0" stop-color="#fbc070"/><stop offset="1" stop-color="#f08a1e"/></linearGradient></defs><path d="M1 3.5 Q1 1 3.5 1 L10 1 L13 4.3 L31 4.3 Q32.5 4.3 32.5 6 L32.5 12 L1 12 Z" fill="url(#g50)" stroke="#d8852e" stroke-width="1.1"/><path d="M1 11 L33 11 Q34 11 34 12.5 L34 26 Q34 27.5 32.5 27.5 L2.5 27.5 Q1 27.5 1 26 Z" fill="url(#g51)" stroke="#cf6f18" stroke-width="1.1"/><path d="M2.5 12.5 L32.5 12.5" stroke="#ffe2b0" stroke-width="1"/></svg><div class="t" style="left:158.5px;top:522.74px;font-size:13.3px;line-height:17px;color:#3b3b4a;font-weight:400;">Toko</div><svg style="position:absolute;left:38.7px;top:565.1750000000001px;" width="18.6" height="18.6" viewBox="0 0 18.6 18.6"><circle cx="9.3" cy="9.3" r="7.3" fill="#d8f0fe" stroke="#a8b8ae" stroke-width="1.25"/><path d="M4.800000000000001 9.3 L13.3 9.3 M9.8 5.800000000000001 L13.3 9.3 L9.8 12.8" stroke="#a8b8ae" stroke-width="1.25" fill="none"/></svg><svg style="position:absolute;left:72px;top:560.0px;" width="35" height="29" viewBox="0 0 35 29"><defs><linearGradient id="g52" x1="0" y1="0" x2="0" y2="1"><stop offset="0" stop-color="#fff4c8"/><stop offset="1" stop-color="#f6c874"/></linearGradient><linearGradient id="g53" x1="0" y1="0" x2="0" y2="1"><stop offset="0" stop-color="#fbc070"/><stop offset="1" stop-color="#f08a1e"/></linearGradient></defs><path d="M1 3.5 Q1 1 3.5 1 L10 1 L13 4.3 L31 4.3 Q32.5 4.3 32.5 6 L32.5 12 L1 12 Z" fill="url(#g52)" stroke="#d8852e" stroke-width="1.1"/><path d="M1 11 L33 11 Q34 11 34 12.5 L34 26 Q34 27.5 32.5 27.5 L2.5 27.5 Q1 27.5 1 26 Z" fill="url(#g53)" stroke="#cf6f18" stroke-width="1.1"/><path d="M2.5 12.5 L32.5 12.5" stroke="#ffe2b0" stroke-width="1"/></svg><div class="t" style="left:114.5px;top:566.49px;font-size:13.3px;line-height:17px;color:#3b3b4a;font-weight:400;">Direktori</div><svg style="position:absolute;left:38.7px;top:608.9250000000001px;" width="18.6" height="18.6" viewBox="0 0 18.6 18.6"><circle cx="9.3" cy="9.3" r="7.3" fill="#dcfae3" stroke="#a8b8ae" stroke-width="1.25"/><path d="M4.800000000000001 9.3 L13.3 9.3 M9.8 5.800000000000001 L13.3 9.3 L9.8 12.8" stroke="#a8b8ae" stroke-width="1.25" fill="none"/></svg><svg style="position:absolute;left:72px;top:603.75px;" width="35" height="29" viewBox="0 0 35 29"><defs><linearGradient id="g54" x1="0" y1="0" x2="0" y2="1"><stop offset="0" stop-color="#fff4c8"/><stop offset="1" stop-color="#f6c874"/></linearGradient><linearGradient id="g55" x1="0" y1="0" x2="0" y2="1"><stop offset="0" stop-color="#fbc070"/><stop offset="1" stop-color="#f08a1e"/></linearGradient></defs><path d="M1 3.5 Q1 1 3.5 1 L10 1 L13 4.3 L31 4.3 Q32.5 4.3 32.5 6 L32.5 12 L1 12 Z" fill="url(#g54)" stroke="#d8852e" stroke-width="1.1"/><path d="M1 11 L33 11 Q34 11 34 12.5 L34 26 Q34 27.5 32.5 27.5 L2.5 27.5 Q1 27.5 1 26 Z" fill="url(#g55)" stroke="#cf6f18" stroke-width="1.1"/><path d="M2.5 12.5 L32.5 12.5" stroke="#ffe2b0" stroke-width="1"/></svg><div class="t" style="left:114.5px;top:610.24px;font-size:13.3px;line-height:17px;color:#3b3b4a;font-weight:400;">Laporan</div><svg style="position:absolute;left:362px;top:706px;" width="18" height="18" viewBox="0 0 18 18"><circle cx="6.8" cy="6.8" r="5" fill="none" stroke="#2a62c8" stroke-width="2.4"/><path d="M10.5 10.5 L15.5 15.5" stroke="#2a62c8" stroke-width="3" stroke-linecap="round"/></svg><div style="left:24px;top:737px;width:370px;height:43px;border:1px solid #b0b0b0;background:#fff"></div><div style="left:25px;top:776px;width:368px;height:1px;background:#b8b8b8"></div><svg style="position:absolute;left:29px;top:747px;" width="19" height="19" viewBox="0 0 19 19"><defs><linearGradient id="g56" x1="0" y1="0" x2="0" y2="1"><stop offset="0" stop-color="#a8d880"/><stop offset="1" stop-color="#5a9a34"/></linearGradient><linearGradient id="g57" x1="0" y1="0" x2="0" y2="1"><stop offset="0" stop-color="#d89060"/><stop offset="1" stop-color="#a85a2a"/></linearGradient></defs><path d="M1.5 16.5 Q1.5 11.8 9.5 11.8 Q17.5 11.8 17.5 16.5 Q17.5 18.5 9.5 18.5 Q1.5 18.5 1.5 16.5 Z" fill="url(#g56)" stroke="#4a8a2a" stroke-width="0.7"/><ellipse cx="9.5" cy="7" rx="4" ry="5.2" fill="#f4cca4" stroke="#b07040" stroke-width="0.7"/><path d="M5 8 Q4.2 0.8 9.5 0.8 Q14.8 0.8 14 8 Q13 4 9.5 4 Q6 4 5 8 Z" fill="url(#g57)"/></svg><div class="t" style="left:54px;top:747.94px;font-size:14.6px;line-height:19px;color:#b9b9b9;font-weight:700;">Dhukungan teknis</div><div style="left:331px;top:752px;width:12px;height:9px;border:1.5px solid #7a7a7a;border-top-width:2px"></div><svg style="position:absolute;left:369px;top:751px;" width="9" height="11" viewBox="0 0 9 11"><rect x="1.5" y="0.5" width="6" height="6.5" fill="none" stroke="#7a7a7a" stroke-width="1.3"/><rect x="4.2" y="1" width="1.5" height="6" fill="#7a7a7a"/><rect x="0" y="6.3" width="9" height="1.5" fill="#7a7a7a"/><rect x="4" y="7.5" width="1.3" height="3.5" fill="#7a7a7a"/></svg><div style="left:404px;top:176px;width:1px;height:20px;background:#b8b8b8"></div><div style="left:406.5px;top:176px;width:1px;height:20px;background:#b8b8b8"></div><svg style="position:absolute;left:414px;top:167px;" width="39" height="39" viewBox="0 0 39 39"><defs><radialGradient id="g58" cx="0.5" cy="0.5" r="0.5"><stop offset="0" stop-color="#ffffff"/><stop offset="0.7" stop-color="#f0f5fa"/><stop offset="1" stop-color="#dce6ee"/></radialGradient><linearGradient id="g59" x1="0" y1="0" x2="0.4" y2="1"><stop offset="0" stop-color="#f6b4b4"/><stop offset="0.45" stop-color="#e67a7a"/><stop offset="1" stop-color="#cc5454"/></linearGradient></defs><circle cx="18.8" cy="18.5" r="17.6" fill="url(#g59)" stroke="#d06a6a" stroke-width="0.8"/><path d="M5.5 12 Q11 3.2 21 3" stroke="#fde0e0" stroke-width="1.6" fill="none" stroke-linecap="round"/><circle cx="18.8" cy="18.5" r="13.2" fill="url(#g58)" stroke="#d08080" stroke-width="0.8"/><path d="M18.8 18.5 L26.8 9.8" stroke="#5a6070" stroke-width="1.2"/><path d="M18.8 18.5 L18.8 30.3" stroke="#5a6070" stroke-width="1.6"/><path d="M6.800000000000001 18.5 L18.8 18.5" stroke="#e05050" stroke-width="1.3"/><circle cx="18.8" cy="18.5" r="1.5" fill="#fff" stroke="#5a6070" stroke-width="0.8"/><g fill="#7080a0"><circle cx="18.8" cy="8.3" r="0.6"/><circle cx="29.0" cy="18.5" r="0.6"/><circle cx="11.8" cy="11.5" r="0.6"/><circle cx="11.8" cy="25.5" r="0.6"/><circle cx="25.8" cy="25.5" r="0.6"/></g></svg><svg style="position:absolute;left:468.5px;top:177.1px;" width="19" height="19" viewBox="0 0 19 19"><circle cx="9.5" cy="9.5" r="7.5" fill="none" stroke="#c8c8c8" stroke-width="1.25"/><path d="M6.9 6.9 L12.1 12.1 M12.3 8.1 L12.3 12.3 L8.1 12.3" stroke="#c8c8c8" stroke-width="1.55" fill="none"/></svg><svg style="position:absolute;left:1409.5px;top:177.2px;" width="19" height="19" viewBox="0 0 19 19"><circle cx="9.5" cy="9.5" r="7.5" fill="none" stroke="#c8c8c8" stroke-width="1.25"/><path d="M6.9 6.9 L12.1 12.1 M12.3 8.1 L12.3 12.3 L8.1 12.3" stroke="#c8c8c8" stroke-width="1.55" fill="none"/></svg><div class="t" style="left:907px;top:169.28px;font-size:26.6px;line-height:35px;color:#333340;font-weight:400;">Dhuwit</div><div style="left:1436px;top:163px;width:26px;height:81px;border:1.5px solid #c4c4c4;background:#f5f5f5"></div><svg style="position:absolute;left:1441px;top:167px;" width="20" height="20" viewBox="0 0 20 20"><defs><linearGradient id="g60" x1="0" y1="0" x2="0" y2="1"><stop offset="0" stop-color="#7ab0f0"/><stop offset="1" stop-color="#2f6cc8"/></linearGradient></defs><rect x="0.5" y="1" width="11" height="12" fill="#dfe8f6" stroke="#8aa0cc" stroke-width="1"/><path d="M3 4 H9 M3 6.5 H9 M3 9 H9" stroke="#8aa0cc" stroke-width="0.9"/><rect x="7" y="3.5" width="12" height="15" rx="1" fill="url(#g60)" stroke="#2f5fb0" stroke-width="0.8"/><text x="13" y="14.8" text-anchor="middle" font-family="Liberation Sans" font-weight="700" font-size="11" fill="#fff">?</text></svg><div class="t" style="left:1439px;top:196px;width:24px;height:44px;"><div style="position:absolute;left:24px;top:0;transform-origin:0 0;transform:rotate(90deg);font-size:13.3px;line-height:24px;color:#3b3b4a;white-space:nowrap">manual</div></div><div style="left:397px;top:217px;width:1037px;height:566px;border:1.5px solid #d2d2d2;border-left:2px solid #d4d4d4;border-bottom:none;background:#fff"></div><div style="left:399px;top:280px;width:1034px;height:1px;background:#d2d2d2"></div><div style="left:414px;top:234px;width:432px;height:31px;border:1px solid #c2c2c2;background:#fff"></div><div class="t" style="left:415px;top:240.51px;font-size:13.25px;line-height:17px;color:#3b3b4a;font-weight:400;">Panelusuran tabel lengkap</div><svg style="position:absolute;left:825px;top:247px;" width="9" height="6" viewBox="0 0 9 6"><path d="M0.5 0.5 L8.5 0.5 L4.5 5.5 Z" fill="#555"/></svg><div class="t" style="left:406.5px;top:295.93px;font-size:13.2px;line-height:17px;color:#c2c2c8;font-weight:400;">Seret judhul kolom ing kene kanggo dikelompokake</div><div style="left:397px;top:324px;width:1029px;height:1.5px;background:#b9b9b9"></div><div style="left:398px;top:325.5px;width:1027px;height:42.5px;background:#f4f4f4"></div><div style="left:1425px;top:324px;width:1px;height:176px;background:#c8c8c8"></div><div style="left:412px;top:325px;width:1px;height:43px;background:#c8c8c8"></div><div style="left:570px;top:325px;width:1px;height:43px;background:#c8c8c8"></div><div style="left:790px;top:325px;width:1px;height:43px;background:#c8c8c8"></div><div style="left:1034px;top:325px;width:1px;height:43px;background:#c8c8c8"></div><div style="left:1302px;top:325px;width:1px;height:43px;background:#c8c8c8"></div><div style="left:397px;top:367px;width:1029px;height:1px;background:#c8c8c8"></div><div class="t" style="left:414px;top:330.43px;font-size:13.2px;line-height:17px;color:#3b3b4a;font-weight:400;">Tanggal</div><svg style="position:absolute;left:549px;top:344px;" width="12" height="7" viewBox="0 0 12 7"><path d="M0 6.5 L11 6.5 L5.5 0.5 Z" fill="#6a6a6a"/></svg><div class="t" style="left:573px;top:330.43px;font-size:13.2px;line-height:17px;color:#3b3b4a;font-weight:400;">Saka</div><div class="t" style="left:793px;top:330.43px;font-size:13.2px;line-height:17px;color:#3b3b4a;font-weight:400;">Kanggo</div><div class="t" style="left:1036.5px;top:330.43px;font-size:13.2px;line-height:17px;color:#3b3b4a;font-weight:400;">Barang finansial</div><div class="t" style="left:1304px;top:330.43px;font-size:13.2px;line-height:17px;color:#3b3b4a;font-weight:400;">Gunggunge</div><div style="left:413px;top:368px;width:1012px;height:43px;background:#d8f0fe"></div><div style="left:398px;top:368px;width:14px;height:43px;background:#f4f4f4"></div><div style="left:397px;top:411px;width:1029px;height:1px;background:#c8c8c8"></div><div class="t" style="left:448px;top:380.79px;font-size:13.6px;line-height:18px;color:#3b3b4a;font-weight:400;">06.06.2021</div><div class="t" style="left:573px;top:381.43px;font-size:13.2px;line-height:17px;color:#3b3b4a;font-weight:400;">akun bank</div><div class="t" style="left:793px;top:381.43px;font-size:13.2px;line-height:17px;color:#3b3b4a;font-weight:400;"></div><div class="t" style="left:1036.5px;top:381.43px;font-size:13.2px;line-height:17px;color:#3b3b4a;font-weight:400;">Gaji karyawan</div><div class="t" style="right:68px;top:380.79px;font-size:13.6px;line-height:18px;color:#3b3b4a;font-weight:400;text-align:right;">4 000.00</div><div style="left:413px;top:412px;width:1012px;height:43px;background:#dcfae3"></div><div style="left:398px;top:412px;width:14px;height:43px;background:#f4f4f4"></div><div style="left:397px;top:455px;width:1029px;height:1px;background:#c8c8c8"></div><div class="t" style="left:448px;top:424.79px;font-size:13.6px;line-height:18px;color:#3b3b4a;font-weight:400;">16.02.2022</div><div class="t" style="left:573px;top:425.43px;font-size:13.2px;line-height:17px;color:#3b3b4a;font-weight:400;">akun bank</div><div class="t" style="left:793px;top:425.43px;font-size:13.2px;line-height:17px;color:#3b3b4a;font-weight:400;">Awis</div><div class="t" style="left:1036.5px;top:425.43px;font-size:13.2px;line-height:17px;color:#3b3b4a;font-weight:400;">Transfer dhuwit</div><div class="t" style="right:68px;top:424.79px;font-size:13.6px;line-height:18px;color:#3b3b4a;font-weight:400;text-align:right;">35.00</div><div style="left:413px;top:456px;width:1012px;height:43px;background:#d8f0fe"></div><div style="left:398px;top:456px;width:14px;height:43px;background:#f4f4f4"></div><div style="left:397px;top:499px;width:1029px;height:1px;background:#c8c8c8"></div><div class="t" style="left:448px;top:468.79px;font-size:13.6px;line-height:18px;color:#3b3b4a;font-weight:400;">01.01.2024</div><div class="t" style="left:573px;top:469.43px;font-size:13.2px;line-height:17px;color:#3b3b4a;font-weight:400;"></div><div class="t" style="left:793px;top:469.43px;font-size:13.2px;line-height:17px;color:#3b3b4a;font-weight:400;">akun bank</div><div class="t" style="left:1036.5px;top:469.43px;font-size:13.2px;line-height:17px;color:#3b3b4a;font-weight:400;">Saldo dhisikan</div><div class="t" style="right:68px;top:468.79px;font-size:13.6px;line-height:18px;color:#3b3b4a;font-weight:400;text-align:right;">1 000.00</div><div style="left:412px;top:368px;width:1px;height:132px;background:#c8c8c8"></div><div style="left:412.5px;top:368.5px;width:1013px;height:43px;border:1px dotted #222"></div><svg style="position:absolute;left:402px;top:386px;" width="6" height="10" viewBox="0 0 6 10"><path d="M0.3 0.3 L5.8 4.8 L0.3 9.3 Z" fill="#606060"/></svg><div style="left:399px;top:735px;width:1027px;height:48px;border-top:1.5px solid #d0d0d0;border-right:1px solid #d0d0d0;background:#f4f4f4"></div><div style="left:399px;top:780px;width:1027px;height:3px;background:#c4c4c4"></div><div style="left:1305px;top:739px;width:118px;height:38px;border:1.5px solid #d0d0d0;background:#fff"></div><div class="t" style="right:76px;top:749.89px;font-size:13.6px;line-height:18px;color:#3d3d50;font-weight:400;text-align:right;">5 035.00</div><div style="left:22px;top:783px;width:1447px;height:4px;border:1px solid #d0d0d0;background:#fafafa"></div><div style="left:24px;top:784px;width:181px;height:52px;border:1px solid #b4b4b4;border-top:none;background:#f4f4f4"></div><svg style="position:absolute;left:40px;top:797px;" width="31" height="27" viewBox="0 0 31 27"><defs><linearGradient id="g61" x1="0" y1="0" x2="0" y2="1"><stop offset="0" stop-color="#8ab6e6"/><stop offset="1" stop-color="#4a86c8"/></linearGradient><linearGradient id="g62" x1="0" y1="0" x2="0" y2="1"><stop offset="0" stop-color="#f4f6fc"/><stop offset="1" stop-color="#dde4f2"/></linearGradient></defs><rect x="1" y="1" width="29" height="25" rx="2.5" fill="url(#g62)" stroke="#6a86b8" stroke-width="1.2"/><path d="M1.6 3.5 Q1.6 1.6 3.5 1.6 L27.5 1.6 Q29.4 1.6 29.4 3.5 L29.4 6.5 L1.6 6.5 Z" fill="url(#g61)"/><circle cx="25.3" cy="4.2" r="1.3" fill="#e04040"/></svg><div class="t" style="left:82px;top:801.19px;font-size:13.3px;line-height:17px;color:#555560;font-weight:400;">Bukak cepet</div><div style="left:168px;top:800px;width:19px;height:19px;background:#fff"></div><svg style="position:absolute;left:172.5px;top:805px;" width="11" height="9.5" viewBox="0 0 11 9.5"><path d="M1 0.8 L10 8.7 M10 0.8 L1 8.7" stroke="#1e9ae0" stroke-width="2.2" fill="none"/></svg><div style="left:204px;top:783px;width:152px;height:56px;border:1px solid #b4b4b4;border-top:none;border-bottom:none;background:#fff"></div><div style="left:204px;top:836px;width:152px;height:3px;background:#02a2f0"></div><svg style="position:absolute;left:221px;top:794px;" width="30" height="33" viewBox="0 0 30 34"><defs><linearGradient id="g63" x1="0" y1="0" x2="0" y2="1"><stop offset="0" stop-color="#d4e8f8"/><stop offset="0.45" stop-color="#a8cdee"/><stop offset="1" stop-color="#74a8de"/></linearGradient><linearGradient id="g64" x1="0" y1="0" x2="0" y2="1"><stop offset="0" stop-color="#8090b0"/><stop offset="0.5" stop-color="#4a5a80"/><stop offset="1" stop-color="#1c2644"/></linearGradient></defs><rect x="5" y="1.5" width="24.5" height="32" rx="2.2" fill="url(#g63)" stroke="#5a86c4" stroke-width="1"/><rect x="5.5" y="1.8" width="23.5" height="2.6" fill="#f6f4f0"/><rect x="5.5" y="4.4" width="23.5" height="1" fill="#7aa6d8"/><path d="M3.2 1 L7.5 1 L7.5 33.8 L3.2 33.8 Q0.6 33.8 0.6 31 L0.6 3.8 Q0.6 1 3.2 1 Z" fill="url(#g64)"/></svg><div class="t" style="left:263.5px;top:802.39px;font-size:13.3px;line-height:17px;color:#1e95e2;font-weight:400;">Dhuwit</div><svg style="position:absolute;left:324px;top:806px;" width="11" height="9.5" viewBox="0 0 11 9.5"><path d="M1 0.8 L10 8.7 M10 0.8 L1 8.7" stroke="#1e9ae0" stroke-width="2.2" fill="none"/></svg><svg style="position:absolute;left:28.7px;top:841px;" width="21" height="21" viewBox="0 0 21 21"><defs><linearGradient id="g65" x1="0" y1="0" x2="0" y2="1"><stop offset="0" stop-color="#6a9ad8"/><stop offset="1" stop-color="#3c6cb0"/></linearGradient></defs><circle cx="10.2" cy="10.2" r="9.9" fill="#4a82c2"/><rect x="8.6" y="4.2" width="3" height="2.6" fill="#fff"/><rect x="8.6" y="8.2" width="3" height="7.8" fill="#fff"/></svg><div class="t" style="left:70px;top:843.89px;font-size:13.6px;line-height:18px;color:#3d3d48;font-weight:400;">7.3.9041.10 Professional</div><div style="left:247px;top:842px;width:1px;height:19px;background:#c4c4c4"></div><div style="left:417px;top:842px;width:1px;height:19px;background:#c4c4c4"></div><div style="left:595px;top:842px;width:1px;height:19px;background:#c4c4c4"></div><div style="left:744px;top:842px;width:1px;height:19px;background:#c4c4c4"></div><div style="left:893px;top:842px;width:1px;height:19px;background:#c4c4c4"></div><div style="left:1438px;top:842px;width:1px;height:19px;background:#c4c4c4"></div><svg style="position:absolute;left:261px;top:841px;" width="16" height="20" viewBox="0 0 16 20"><defs><linearGradient id="g66" x1="0" y1="0" x2="1" y2="0"><stop offset="0" stop-color="#c87a2a"/><stop offset="0.35" stop-color="#ffe6a8"/><stop offset="0.6" stop-color="#f0b050"/><stop offset="1" stop-color="#b86818"/></linearGradient></defs><path d="M1 3.5 Q1 0.8 8 0.8 Q15 0.8 15 3.5 L15 16.5 Q15 19.2 8 19.2 Q1 19.2 1 16.5 Z" fill="url(#g66)" stroke="#a85a14" stroke-width="0.8"/><path d="M1 8 Q8 10.5 15 8 M1 12.5 Q8 15 15 12.5" stroke="#a85a14" stroke-width="0.8" fill="none"/></svg><div class="t" style="left:299px;top:843.82px;font-size:13.8px;line-height:18px;color:#3d3d48;font-weight:400;">localhost (utf8)</div><svg style="position:absolute;left:430px;top:842px;" width="19" height="19" viewBox="0 0 19 19"><defs><linearGradient id="g67" x1="0" y1="0" x2="0" y2="1"><stop offset="0" stop-color="#a8d880"/><stop offset="1" stop-color="#5a9a34"/></linearGradient><linearGradient id="g68" x1="0" y1="0" x2="0" y2="1"><stop offset="0" stop-color="#d89060"/><stop offset="1" stop-color="#a85a2a"/></linearGradient></defs><path d="M1.5 16.5 Q1.5 11.8 9.5 11.8 Q17.5 11.8 17.5 16.5 Q17.5 18.5 9.5 18.5 Q1.5 18.5 1.5 16.5 Z" fill="url(#g67)" stroke="#4a8a2a" stroke-width="0.7"/><ellipse cx="9.5" cy="7" rx="4" ry="5.2" fill="#f4cca4" stroke="#b07040" stroke-width="0.7"/><path d="M5 8 Q4.2 0.8 9.5 0.8 Q14.8 0.8 14 8 Q13 4 9.5 4 Q6 4 5 8 Z" fill="url(#g68)"/></svg><div class="t" style="left:469px;top:844.63px;font-size:12.9px;line-height:17px;color:#3d3d48;font-weight:400;">NIKOLAY (MAIN)</div><svg style="position:absolute;left:608.5px;top:842.6px;" width="18" height="18" viewBox="0 0 18 18"><rect x="0.5" y="0.5" width="17" height="17" fill="#fff" stroke="#4a6aa8" stroke-width="1"/><rect x="0.5" y="0.5" width="17" height="3.8" fill="#e05050"/><text x="9" y="15.3" text-anchor="middle" font-family="Liberation Sans" font-weight="700" font-size="10.5" fill="#2a4a8a">31</text></svg><div class="t" style="left:649.5px;top:843.85px;font-size:13.7px;line-height:18px;color:#3d3d48;font-weight:400;">16.09.2024</div><div class="t" style="left:779.5px;top:843.68px;font-size:14.2px;line-height:18px;color:#3d3d48;font-weight:400;">00:00:00:104</div><svg style="position:absolute;left:1452.5px;top:857.5px;" width="3" height="3" viewBox="0 0 3 3"><path d="M1.5 0 L1.5 3 M0 1.5 L3 1.5" stroke="#6a6a6a" stroke-width="1.1"/><rect x="1" y="1" width="1" height="1" fill="#555"/></svg><svg style="position:absolute;left:1457.5px;top:857.5px;" width="3" height="3" viewBox="0 0 3 3"><path d="M1.5 0 L1.5 3 M0 1.5 L3 1.5" stroke="#6a6a6a" stroke-width="1.1"/><rect x="1" y="1" width="1" height="1" fill="#555"/></svg><svg style="position:absolute;left:1462.5px;top:857.5px;" width="3" height="3" viewBox="0 0 3 3"><path d="M1.5 0 L1.5 3 M0 1.5 L3 1.5" stroke="#6a6a6a" stroke-width="1.1"/><rect x="1" y="1" width="1" height="1" fill="#555"/></svg><svg style="position:absolute;left:1457.5px;top:852.5px;" width="3" height="3" viewBox="0 0 3 3"><path d="M1.5 0 L1.5 3 M0 1.5 L3 1.5" stroke="#6a6a6a" stroke-width="1.1"/><rect x="1" y="1" width="1" height="1" fill="#555"/></svg><svg style="position:absolute;left:1462.5px;top:852.5px;" width="3" height="3" viewBox="0 0 3 3"><path d="M1.5 0 L1.5 3 M0 1.5 L3 1.5" stroke="#6a6a6a" stroke-width="1.1"/><rect x="1" y="1" width="1" height="1" fill="#555"/></svg><svg style="position:absolute;left:1462.5px;top:847.5px;" width="3" height="3" viewBox="0 0 3 3"><path d="M1.5 0 L1.5 3 M0 1.5 L3 1.5" stroke="#6a6a6a" stroke-width="1.1"/><rect x="1" y="1" width="1" height="1" fill="#555"/></svg><div style="left:0;top:0;width:1490px;height:885px;border-left:1px solid #8c8c8c;border-top:1px solid #8c8c8c;border-right:2px solid #8c8c8c;border-bottom:2px solid #8c8c8c"></div></body></html>
